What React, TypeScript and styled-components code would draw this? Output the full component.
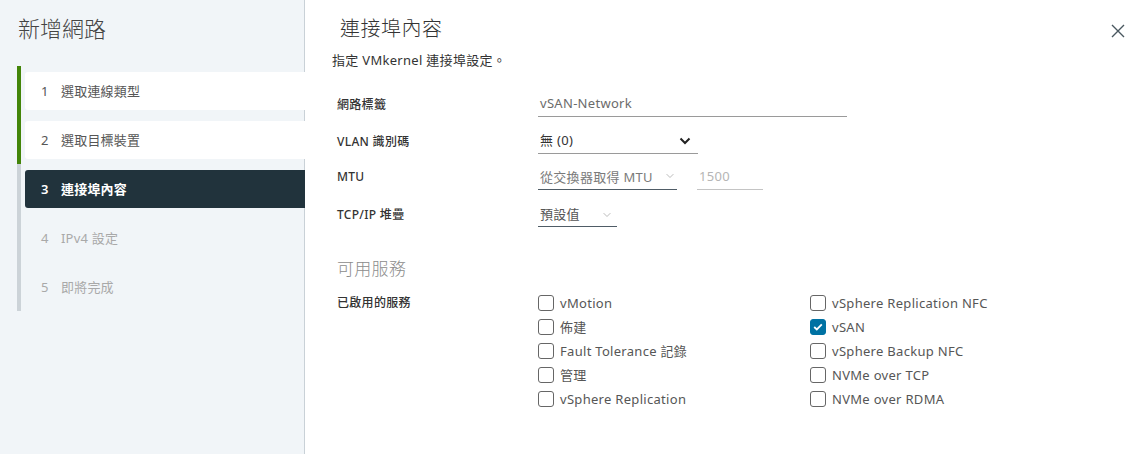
import React from "react";
import styled, { createGlobalStyle } from "styled-components";

const Global = createGlobalStyle`
  html, body { margin: 0; padding: 0; }
  body {
    font-family: "Noto Sans", "Noto Sans CJK TC", sans-serif;
    color: #333;
    background: #fff;
  }
  * { box-sizing: border-box; }
`;

const Page = styled.div`
  display: flex;
  width: 1139px;
  height: 454px;
  overflow: hidden;
`;

const Sidebar = styled.aside`
  width: 305px;
  flex: none;
  background: #f1f5f8;
  border-right: 1px solid #c9d1d7;
  display: flex;
  flex-direction: column;
  padding: 14px 0 0 17px;
`;

const SideTitle = styled.h1`
  margin: 0 0 24px 1px;
  font-size: 22px;
  font-weight: 300;
  line-height: 28px;
  color: #444;
`;

const StepList = styled.ol`
  list-style: none;
  margin: 0;
  padding: 6px 0 0 0;
  display: flex;
  flex-direction: column;
  gap: 11px;
  border-left: 4px solid #ccd3d8;
  position: relative;
  height: 245px;
  margin-right: -1px;
`;

const Progress = styled.div`
  position: absolute;
  left: -4px;
  top: 0;
  width: 4px;
  height: 98px;
  background: #438509;
`;

const Step = styled.li<{ $state: "done" | "active" | "todo" }>`
  margin-left: 4px;
  height: 38px;
  display: flex;
  align-items: center;
  padding-left: 16px;
  padding-bottom: 1px;
  font-size: 13px;
  letter-spacing: 0.2px;
  border-radius: 3px 0 0 3px;
  background: ${(p) =>
    p.$state === "done" ? "#fff" : p.$state === "active" ? "#21333c" : "transparent"};
  color: ${(p) =>
    p.$state === "done" ? "#565656" : p.$state === "active" ? "#fff" : "#a9a9a9"};
  font-weight: ${(p) => (p.$state === "active" ? 600 : 400)};
`;

const StepNum = styled.span`
  width: 20px;
`;

const Main = styled.main`
  flex: 1;
  position: relative;
  padding: 15px 0 0 27px;
  letter-spacing: 0.3px;
`;

const MainTitle = styled.h2`
  margin: 0 0 0 8px;
  font-size: 20px;
  font-weight: 300;
  line-height: 28px;
  color: #333;
  letter-spacing: 0.5px;
`;

const Close = styled.button`
  position: absolute;
  top: 24px;
  right: 13px;
  width: 16px;
  height: 16px;
  padding: 0;
  border: none;
  background: none;
  color: #49575f;
`;

const Desc = styled.p`
  margin: 7px 0 0 0;
  font-size: 13px;
  line-height: 20px;
  color: #333;
`;

const Form = styled.div`
  display: grid;
  grid-template-columns: 201px 1fr;
  grid-auto-rows: 36.7px;
  margin: 22px 0 0 5px;
`;

const Label = styled.div`
  font-size: 12px;
  font-weight: 500;
  color: #333;
  display: flex;
  align-items: flex-start;
  padding-top: 3px;
`;

const Control = styled.div`
  display: flex;
  align-items: flex-start;
  gap: 20px;
`;

const Field = styled.div<{ $w: number; $line: string; $color: string }>`
  width: ${(p) => p.$w}px;
  height: 25px;
  border-bottom: 1px solid ${(p) => p.$line};
  display: flex;
  align-items: center;
  justify-content: space-between;
  padding: 0 2px 2px 2px;
  font-size: 13px;
  color: ${(p) => p.$color};
`;

const Section = styled.h3`
  margin: 18px 0 0 5px;
  font-size: 17px;
  font-weight: 300;
  color: #8c8c8c;
  line-height: 24px;
`;

const Services = styled.div`
  display: grid;
  grid-template-columns: 201px 272px 1fr;
  margin: 10px 0 0 5px;
`;

const ServiceLabel = styled.div`
  font-size: 12px;
  font-weight: 500;
  line-height: 24px;
`;

const Column = styled.div`
  display: flex;
  flex-direction: column;
`;

const Check = styled.label`
  display: flex;
  align-items: center;
  gap: 6px;
  height: 24px;
  font-size: 13px;
  color: #565656;
`;

const Box = styled.span<{ $on?: boolean }>`
  width: 16px;
  height: 16px;
  border-radius: 3px;
  border: 1px solid ${(p) => (p.$on ? "#0072a3" : "#666")};
  background: ${(p) => (p.$on ? "#0072a3" : "#fff")};
  display: flex;
  align-items: center;
  justify-content: center;
  flex: none;
`;

const Chevron = ({ bold }: { bold?: boolean }) => (
  <svg width={bold ? 12 : 10} height={bold ? 8 : 6} viewBox="0 0 12 8" fill="none">
    <path
      d="M1.5 1.5 L6 6 L10.5 1.5"
      stroke={bold ? "#222" : "#b3b3b3"}
      strokeWidth={bold ? 2 : 1.2}
    />
  </svg>
);

const CheckItem = ({ label, on }: { label: string; on?: boolean }) => (
  <Check>
    <Box $on={on}>
      {on && (
        <svg width="10" height="8" viewBox="0 0 10 8">
          <path d="M1.2 4 L3.8 6.4 L8.8 1.3" stroke="#fff" strokeWidth="1.8" fill="none" />
        </svg>
      )}
    </Box>
    {label}
  </Check>
);

const steps: { n: number; t: string; s: "done" | "active" | "todo" }[] = [
  { n: 1, t: "選取連線類型", s: "done" },
  { n: 2, t: "選取目標裝置", s: "done" },
  { n: 3, t: "連接埠內容", s: "active" },
  { n: 4, t: "IPv4 設定", s: "todo" },
  { n: 5, t: "即將完成", s: "todo" },
];

export default function App() {
  return (
    <Page>
      <Global />
      <Sidebar>
        <SideTitle>新增網路</SideTitle>
        <StepList>
          <Progress />
          {steps.map((s) => (
            <Step key={s.n} $state={s.s}>
              <StepNum>{s.n}</StepNum>
              {s.t}
            </Step>
          ))}
        </StepList>
      </Sidebar>
      <Main>
        <MainTitle>連接埠內容</MainTitle>
        <Close aria-label="close">
          <svg width="14" height="14" viewBox="0 0 14 14">
            <path d="M1 1 L13 13 M13 1 L1 13" stroke="#49575f" strokeWidth="1.4" />
          </svg>
        </Close>
        <Desc>指定 VMkernel 連接埠設定。</Desc>
        <Form>
          <Label>網路標籤</Label>
          <Control>
            <Field $w={309} $line="#9a9a9a" $color="#6b6b6b">vSAN-Network</Field>
          </Control>
          <Label>VLAN 識別碼</Label>
          <Control>
            <Field $w={160} $line="#9a9a9a" $color="#333">
              無 (0)
              <span style={{ marginRight: 5 }}>
                <Chevron bold />
              </span>
            </Field>
          </Control>
          <Label>MTU</Label>
          <Control>
            <Field $w={139} $line="#4f5c66" $color="#7a7a7a">
              從交換器取得 MTU
              <Chevron />
            </Field>
            <Field $w={66} $line="#c4c4c4" $color="#b5b5b5">1500</Field>
          </Control>
          <Label>TCP/IP 堆疊</Label>
          <Control>
            <Field $w={79} $line="#4f5c66" $color="#555">
              預設值
              <span style={{ marginRight: 3 }}>
                <Chevron />
              </span>
            </Field>
          </Control>
        </Form>
        <Section>可用服務</Section>
        <Services>
          <ServiceLabel>已啟用的服務</ServiceLabel>
          <Column>
            <CheckItem label="vMotion" />
            <CheckItem label="佈建" />
            <CheckItem label="Fault Tolerance 記錄" />
            <CheckItem label="管理" />
            <CheckItem label="vSphere Replication" />
          </Column>
          <Column>
            <CheckItem label="vSphere Replication NFC" />
            <CheckItem label="vSAN" on />
            <CheckItem label="vSphere Backup NFC" />
            <CheckItem label="NVMe over TCP" />
            <CheckItem label="NVMe over RDMA" />
          </Column>
        </Services>
      </Main>
    </Page>
  );
}
